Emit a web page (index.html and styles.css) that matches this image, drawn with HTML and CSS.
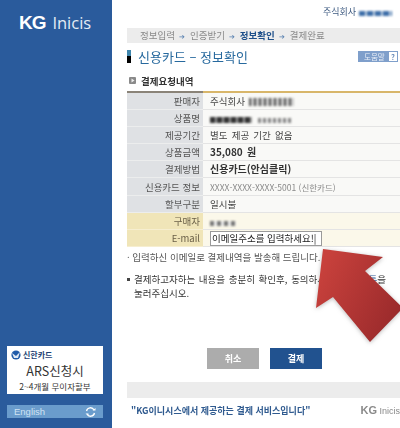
FILE: index.html
```html
<!DOCTYPE html>
<html lang="ko">
<head>
    <meta charset="UTF-8">
    <title>KG Inicis</title>
    <link rel="stylesheet" href="styles.css">
</head>
<body>
    <div class="page">
        <aside class="sidebar">
            <div class="logo"><b>KG</b> <span>Inicis</span></div>
            <div class="ars-card">
                <div class="ars-brand">
                    <svg width="11" height="10" viewBox="0 0 11 10"><circle cx="5" cy="5" r="4.6" fill="#1f5aa8"/><path d="M1 3 L5 6 L9 2 L7 8 L3 8 Z" fill="#dfe8f3"/></svg>
                    <span>신한카드</span>
                </div>
                <div class="ars-title">ARS신청시</div>
                <div class="ars-sub">2~4개월 무이자할부</div>
            </div>
            <div class="lang-bar">
                <span>English</span>
                <svg width="11" height="10" viewBox="0 0 11 10"><path d="M1.5 4 A4 4 0 0 1 9 3 M9.5 6 A4 4 0 0 1 2 7" fill="none" stroke="#fff" stroke-width="1.3"/><path d="M7.5 3.5 H10.5 V1 Z M0.5 6.5 H3.5 V9 Z" fill="#fff"/></svg>
            </div>
        </aside>

        <main class="main">
            <div class="company">주식회사 <span class="smudge smudge-blue"></span></div>
            <div class="steps">
                <span>정보입력</span> <i>➔</i> <span>인증받기</span> <i>➔</i> <b>정보확인</b> <i>➔</i> <span>결제완료</span>
            </div>
            <div class="title-row">
                <span class="title-mark"></span>
                <h1>신용카드 – 정보확인</h1>
                <div class="help"><span>도움말</span><em>?</em></div>
            </div>
            <h2 class="section">
                <svg class="section-icon" width="7" height="7" viewBox="0 0 7 7"><rect width="7" height="7" rx="1" fill="#8a8a8a"/><path d="M2.5 1.5 L5.5 3.5 L2.5 5.5 Z" fill="#eee"/></svg>
                결제요청내역
            </h2>

            <table class="info">
                <tr><th>판매자</th><td>주식회사 <span class="smudge smudge-name"></span></td></tr>
                <tr><th>상품명</th><td><span class="smudge smudge-dark"></span><span class="smudge smudge-light"></span></td></tr>
                <tr><th>제공기간</th><td>별도 제공 기간 없음</td></tr>
                <tr><th>상품금액</th><td><strong>35,080 원</strong></td></tr>
                <tr><th>결제방법</th><td><strong>신용카드(안심클릭)</strong></td></tr>
                <tr><th>신용카드 정보</th><td class="muted">XXXX-XXXX-XXXX-5001 (신한카드)</td></tr>
                <tr><th>할부구분</th><td>일시불</td></tr>
                <tr class="input-row"><th>구매자</th><td><span class="smudge smudge-buyer"></span></td></tr>
                <tr class="input-row"><th>E-mail</th><td><div class="email-box">이메일주소를 입력하세요!|</div></td></tr>
            </table>

            <p class="note">· 입력하신 이메일로 결제내역을 발송해 드립니다.</p>
            <p class="agree"><span class="agree-bullet"></span>결제하고자하는 내용을 충분히 확인후, 동의하시면 결제 <span class="agree-link">버튼</span>을<br>눌러주십시오.</p>

            <div class="buttons">
                <button class="btn btn-cancel">취소</button>
                <button class="btn btn-pay">결제</button>
            </div>

            <div class="grey-bar"></div>
            <div class="footer">
                <span class="footer-text">"KG이니시스에서 제공하는 결제 서비스입니다"</span>
                <span class="footer-logo"><b>KG</b> Inicis</span>
            </div>
        </main>
    </div>

    <svg class="arrow" width="90" height="100" viewBox="0 0 90 100">
        <defs>
            <linearGradient id="arrowFill" x1="0" y1="0.3" x2="1" y2="0.8">
                <stop offset="0" stop-color="#c8413c"/>
                <stop offset="1" stop-color="#96282a"/>
            </linearGradient>
        </defs>
        <polygon points="3,1 63,9 45,23 85,62 80,63 50,94 13,49 -4,60" fill="url(#arrowFill)"/>
    </svg>
</body>
</html>
```

FILE: styles.css
```css
html, body {
    margin: 0;
    padding: 0;
    height: 428px;
    overflow: hidden;
    background: #fff;
}
body {
    font-family: "Noto Sans CJK KR", "Liberation Sans", sans-serif;
    font-size: 10px;
    color: #444;
    position: relative;
}
.page {
    display: flex;
    height: 428px;
    filter: blur(0.45px);
}

/* left blue column */
.sidebar {
    width: 112px;
    flex: none;
    background: #2a5b9c;
    display: flex;
    flex-direction: column;
    padding: 0 9px 10px 7px;
    box-sizing: border-box;
}
.logo {
    margin: 11px 0 0 12px;
    color: #fff;
    font-family: "Liberation Sans", sans-serif;
    font-size: 14px;
    line-height: 24px;
    white-space: nowrap;
}
.logo b {
    font-size: 19px;
    letter-spacing: -1px;
    margin-right: 3px;
}
.logo span {
    font-family: "Open Sans", sans-serif;
    font-size: 16.5px;
    color: #e4ecf5;
}
.ars-card {
    margin-top: auto;
    background: #fff;
    height: 48px;
    padding: 4px 4px 0;
    box-sizing: border-box;
    text-align: center;
    color: #333;
}
.ars-brand {
    display: flex;
    align-items: center;
    gap: 1px;
    font-size: 8px;
    line-height: 10px;
    font-weight: 700;
    color: #1d3f73;
}
.ars-title {
    font-size: 12.5px;
    line-height: 19px;
    margin-top: 1px;
}
.ars-sub {
    font-size: 8.5px;
    line-height: 13px;
}
.lang-bar {
    margin-top: 11px;
    height: 13px;
    background: #6a9ccc;
    color: #cfe2f3;
    font-family: "Liberation Sans", sans-serif;
    font-size: 9.5px;
    display: flex;
    align-items: center;
    justify-content: space-between;
    padding: 0 7px;
}

/* right column */
.main {
    flex: 1;
    min-width: 0;
    padding-left: 15px;
    display: flex;
    flex-direction: column;
}
.company {
    height: 28px;
    padding: 5px 0 0 196px;
    box-sizing: border-box;
    font-size: 9px;
    line-height: 14px;
    white-space: nowrap;
    color: #3d5a80;
}
.steps {
    height: 15px;
    background: #ececec;
    padding-left: 13px;
    font-size: 9.5px;
    line-height: 15px;
    color: #8a8a8a;
    white-space: nowrap;
    word-spacing: 1.8px;
}
.steps i {
    font-style: normal;
    color: #5f86b3;
    font-size: 7px;
}
.steps b {
    color: #1d4f8a;
}
.title-row {
    display: flex;
    align-items: center;
    height: 27px;
    box-sizing: border-box;
}
.title-mark {
    width: 4px;
    height: 13px;
    background: linear-gradient(#3f86ad 0 50%, #000 50%);
    margin-right: 7px;
}
.title-row h1 {
    margin: 0;
    font-size: 13px;
    font-weight: 400;
    color: #27699e;
    white-space: nowrap;
}
.help {
    margin-left: auto;
    margin-right: 2px;
    width: 40px;
    height: 11px;
    background: #7f9fcb;
    color: #e8eef7;
    font-size: 7.5px;
    line-height: 11px;
    display: flex;
    justify-content: space-between;
    box-sizing: border-box;
    padding: 0 1px 0 6px;
}
.help em {
    font-style: normal;
    font-weight: 700;
    width: 8px;
    height: 9px;
    line-height: 9px;
    margin-top: 1px;
    text-align: center;
    background: #fff;
    color: #6f90bd;
}
.section {
    margin: 0;
    height: 21px;
    display: flex;
    align-items: center;
    font-size: 9.5px;
    font-weight: 700;
    color: #333;
}
.section-icon {
    margin: 0 5px 0 2px;
}

/* info table */
.info {
    width: 100%;
    border-collapse: collapse;
    table-layout: fixed;
}
.info th, .info td {
    height: 17.2px;
    padding: 0;
    box-sizing: border-box;
    border-bottom: 1px solid #e4e4e4;
    font-size: 9.5px;
    line-height: 12px;
    white-space: nowrap;
    overflow: hidden;
}
.info tr:first-child th {
    border-top: 2px solid #8a8378;
}
.info tr:first-child td {
    border-top: 2px solid #d8b66a;
}
.info th {
    width: 76px;
    background: #dfe1e4;
    border-bottom-color: #eceded;
    font-weight: 400;
    color: #555;
    text-align: right;
    padding-right: 3px;
}
.info td {
    padding-left: 7px;
    background: #f9f9f7;
    word-spacing: 1.5px;
}
.info strong {
    color: #333;
    font-size: 10px;
}
.info .muted {
    color: #8a8a8a;
    font-size: 8.5px;
    word-spacing: 0;
}
.input-row th {
    background: #f0e5b8;
    border-bottom-color: #f6eed0;
    color: #6b6148;
}
.input-row td {
    background: #fbf8ea;
}
.email-box {
    width: 112px;
    height: 15px;
    border: 1px solid #9a9a9a;
    background: #fff;
    box-sizing: border-box;
    padding-left: 1px;
    font-size: 9.5px;
    line-height: 12px;
    word-spacing: 0;
    color: #222;
    overflow: hidden;
}

/* blurred out values */
.smudge {
    display: inline-block;
    height: 8px;
    vertical-align: -1px;
    filter: blur(1px);
}
.smudge-blue {
    width: 33px;
    height: 5px;
    background: repeating-linear-gradient(90deg, #3d6ea8 0 6px, #c0cfe0 6px 8px);
}
.smudge-name {
    width: 45px;
    background: repeating-linear-gradient(90deg, #555 0 2px, #ccc 2px 5px);
}
.smudge-dark {
    width: 42px;
    height: 6px;
    background: repeating-linear-gradient(90deg, #333 0 5px, #999 5px 7px);
}
.smudge-light {
    width: 34px;
    height: 5px;
    margin-left: 6px;
    background: repeating-linear-gradient(90deg, #888 0 3px, #eee 3px 5px);
}
.smudge-buyer {
    width: 26px;
    height: 5px;
    background: repeating-linear-gradient(90deg, #777 0 4px, #eee 4px 7px);
}

.note {
    margin: 4px 0 0;
    font-size: 9.5px;
    line-height: 13px;
    color: #555;
    white-space: nowrap;
}
.agree {
    margin: 8px 0 0;
    font-size: 9.5px;
    line-height: 14px;
    color: #333;
    padding-left: 7px;
    white-space: nowrap;
    word-spacing: 1px;
}
.agree-bullet {
    display: inline-block;
    width: 3px;
    height: 3px;
    background: #444;
    margin: 0 4px 2px -7px;
}
.agree-link {
    color: #2a5b9c;
}
.buttons {
    display: flex;
    gap: 11px;
    padding-left: 80px;
    margin-top: 48px;
}
.btn {
    width: 52px;
    height: 21px;
    border: none;
    padding: 0;
    font-family: inherit;
    font-size: 9px;
    font-weight: 700;
    color: #fff;
}
.btn-cancel {
    background: #acacac;
}
.btn-pay {
    background: #21528f;
}
.grey-bar {
    height: 16px;
    background: #ececec;
    margin-top: 13px;
}
.footer {
    display: flex;
    justify-content: space-between;
    align-items: center;
    height: 24px;
    padding: 0 0 0 4px;
}
.footer-text {
    font-size: 9px;
    font-weight: 700;
    color: #2f5a8f;
    white-space: nowrap;
}
.footer-logo {
    font-family: "Liberation Sans", sans-serif;
    font-size: 9px;
    color: #8a8a8a;
    white-space: nowrap;
}
.footer-logo b {
    font-size: 11px;
}

/* the red pointer lying over the form */
.arrow {
    position: absolute;
    left: 320px;
    top: 248px;
    overflow: visible;
    filter: drop-shadow(0 1px 2px rgba(120, 120, 120, 0.5));
}
```
